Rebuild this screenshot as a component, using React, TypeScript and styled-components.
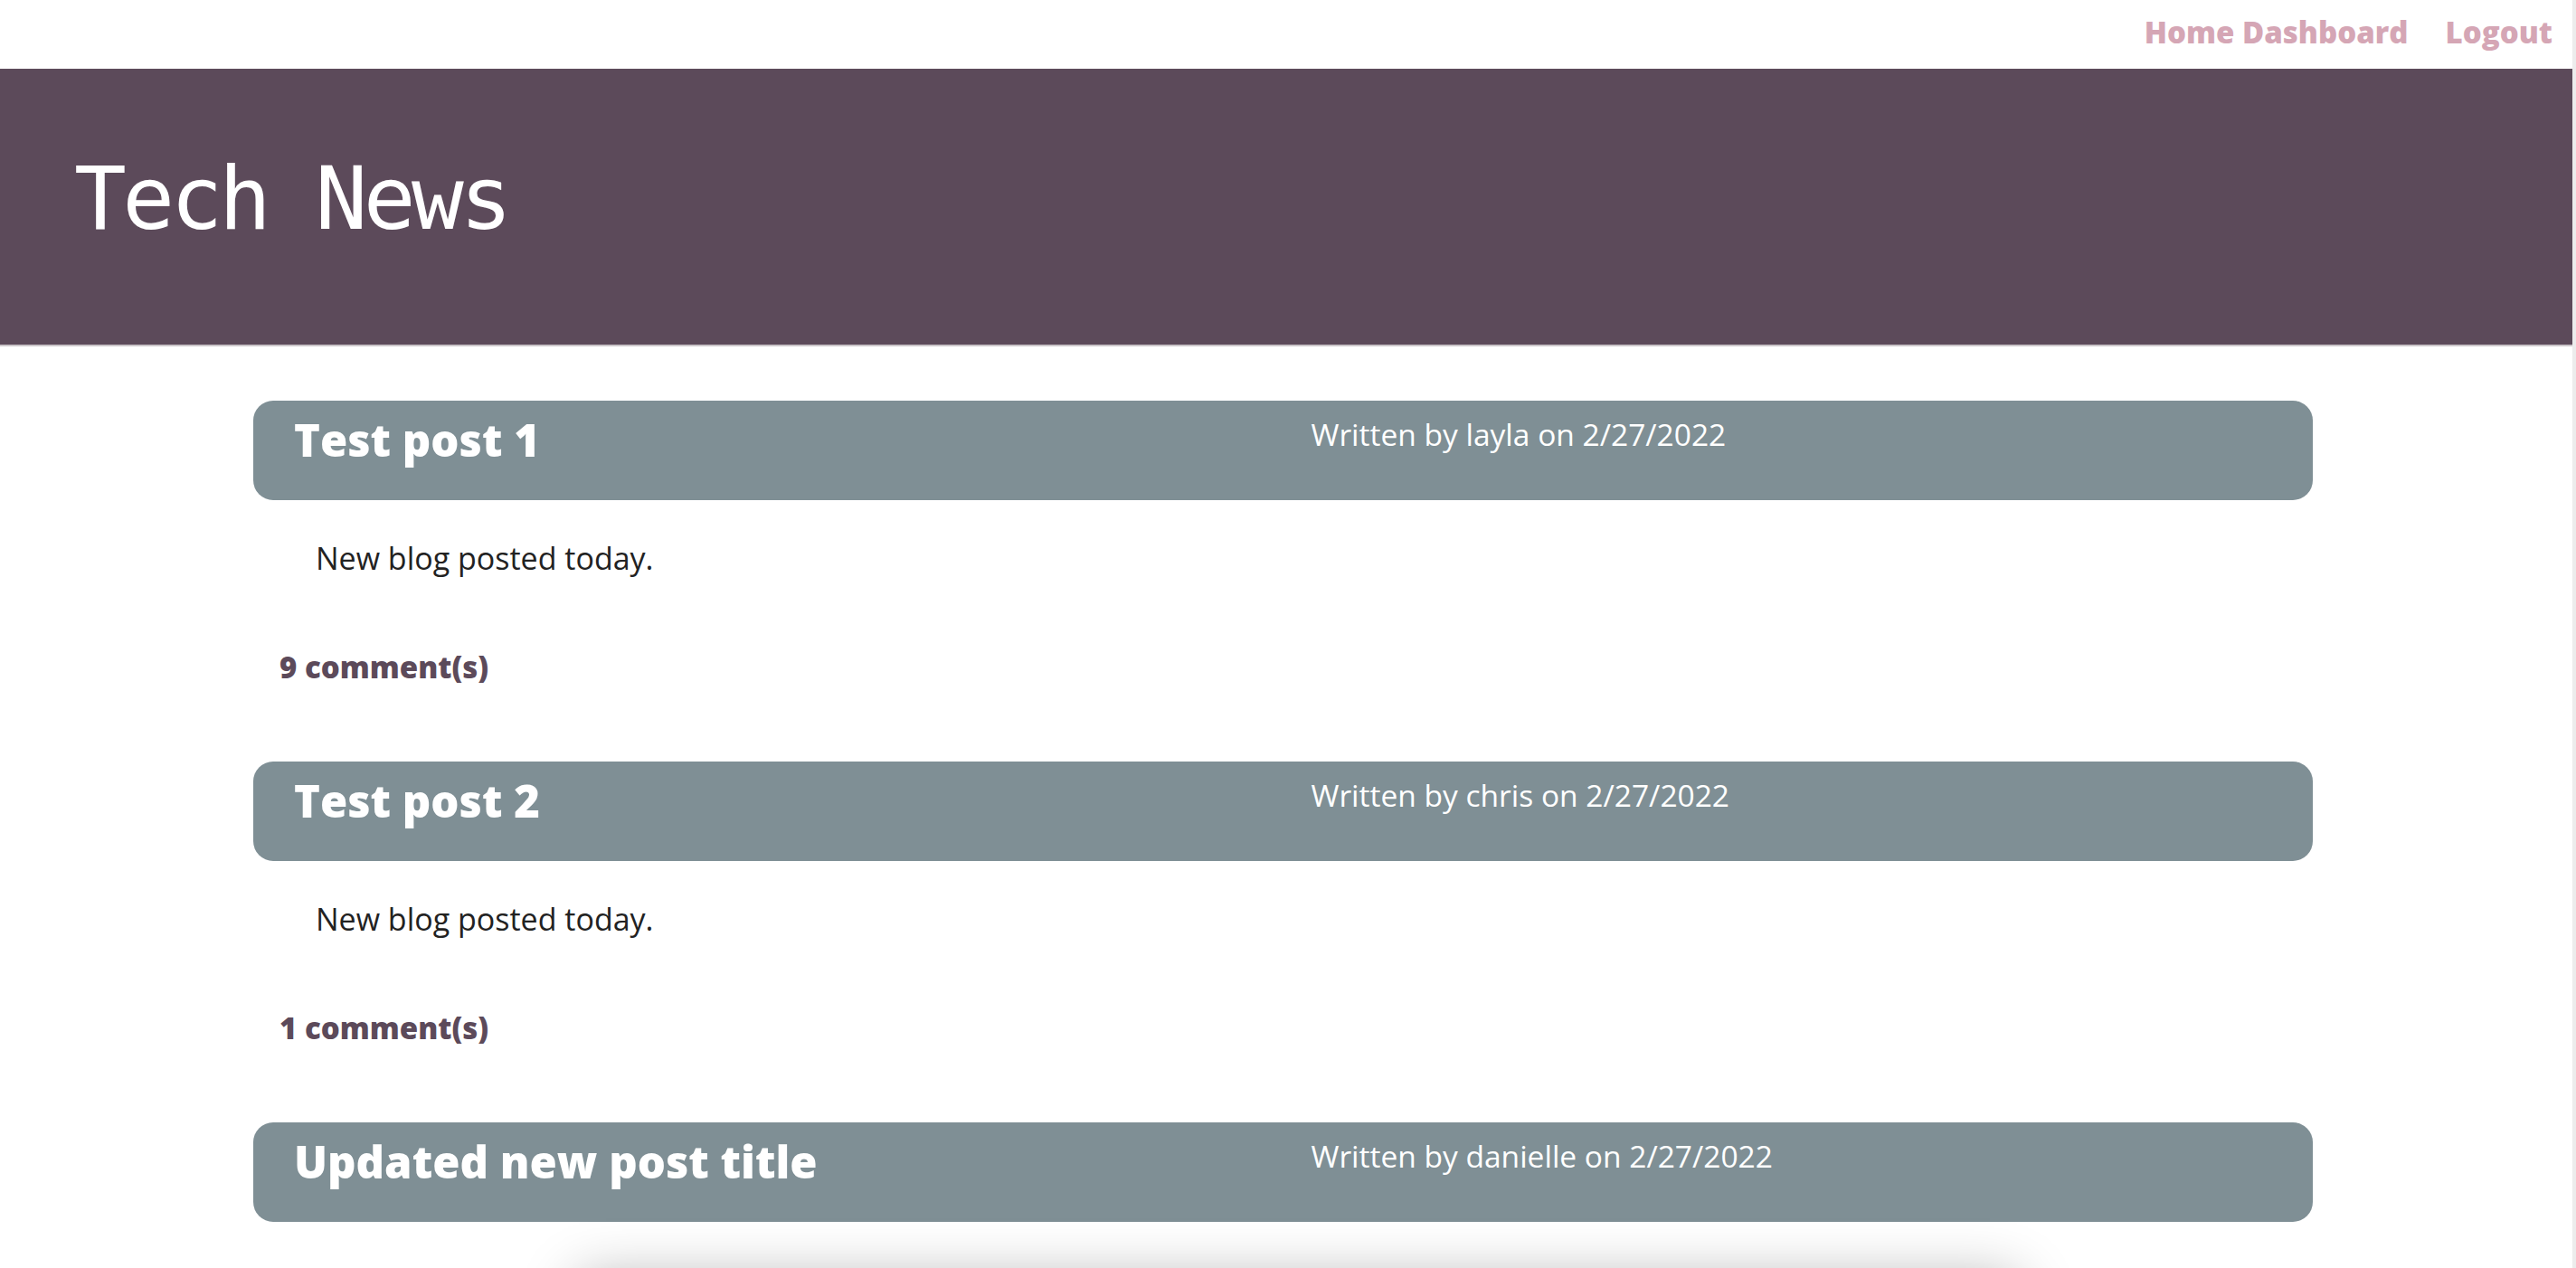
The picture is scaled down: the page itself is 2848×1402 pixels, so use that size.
import React from "react";
import styled, { createGlobalStyle } from "styled-components";

const GlobalStyle = createGlobalStyle`
  html, body {
    margin: 0;
    padding: 0;
    background: #ffffff;
    overflow: hidden;
  }
  body {
    font-family: "Open Sans", "Noto Sans", sans-serif;
  }
  * { box-sizing: border-box; }
`;

const Page = styled.div`
  display: flex;
  width: 2848px;
  height: 1402px;
  overflow: hidden;
`;

const Main = styled.div`
  flex: 1;
  min-width: 0;
  display: flex;
  flex-direction: column;
`;

const ScrollTrack = styled.div`
  width: 4px;
  flex: none;
  background: #ececec;
`;

const Nav = styled.nav`
  height: 76px;
  flex: none;
  display: flex;
  justify-content: flex-end;
  align-items: center;
  gap: 41px;
  padding: 0 22px 6px 0;
`;

const NavLink = styled.a`
  font-family: "Open Sans", sans-serif;
  font-weight: 800;
  font-size: 33px;
  color: #d5a6b5;
  text-decoration: none;
  line-height: 1;
`;

const Hero = styled.header`
  height: 307px;
  flex: none;
  background: #5c4a5a;
  border-bottom: 2px solid #cbc5c9;
  display: flex;
  align-items: center;
  padding: 0 0 18px 82px;
`;

const SiteTitle = styled.h1`
  margin: 0;
  font-family: "DejaVu Sans Mono", "Liberation Mono", monospace;
  font-weight: 400;
  font-size: 96px;
  letter-spacing: -4.5px;
  line-height: 1;
  color: #ffffff;
`;

const Feed = styled.main`
  width: 2277px;
  margin: 60px 0 0 280px;
  display: flex;
  flex-direction: column;
`;

const Post = styled.article`
  display: flex;
  flex-direction: column;
  height: 399px;
  flex: none;
`;

const PostHeader = styled.div`
  height: 110px;
  flex: none;
  background: #7f8f95;
  border-radius: 22px;
  display: grid;
  grid-template-columns: 1fr 1fr;
  align-items: start;
  padding: 14px 45px 0 45px;
  color: #ffffff;
`;

const PostTitle = styled.h2`
  margin: 0;
  font-family: "Open Sans", sans-serif;
  font-weight: 800;
  font-size: 49px;
  line-height: 1.2;
`;

const PostMeta = styled.p`
  margin: 2px 0 0 31px;
  font-family: "Open Sans", sans-serif;
  font-weight: 400;
  font-size: 33.5px;
  line-height: 1.3;
`;

const PostBody = styled.p`
  margin: 42px 0 0 69px;
  font-family: "Open Sans", sans-serif;
  font-size: 34px;
  line-height: 1.3;
  color: #222222;
`;

const CommentCount = styled.a`
  margin: 78px 0 0 29px;
  font-family: "Open Sans", sans-serif;
  font-weight: 800;
  font-size: 33px;
  line-height: 1.3;
  color: #5c4a5a;
  text-decoration: none;
`;

const ShadowPanel = styled.div`
  width: 1590px;
  height: 240px;
  margin: 64px 0 0 360px;
  background: #ffffff;
  box-shadow: 0 0 60px rgba(0, 0, 0, 0.32);
  flex: none;
`;

type PostData = { title: string; author: string; date: string; body: string; comments: number };

const posts: PostData[] = [
  { title: "Test post 1", author: "layla", date: "2/27/2022", body: "New blog posted today.", comments: 9 },
  { title: "Test post 2", author: "chris", date: "2/27/2022", body: "New blog posted today.", comments: 1 },
];

export default function App() {
  return (
    <>
      <GlobalStyle />
      <Page>
        <Main>
          <Nav>
            <NavLink href="#">Home Dashboard</NavLink>
            <NavLink href="#">Logout</NavLink>
          </Nav>
          <Hero>
            <SiteTitle>Tech News</SiteTitle>
          </Hero>
          <Feed>
            {posts.map((p) => (
              <Post key={p.title}>
                <PostHeader>
                  <PostTitle>{p.title}</PostTitle>
                  <PostMeta>
                    Written by {p.author} on {p.date}
                  </PostMeta>
                </PostHeader>
                <PostBody>{p.body}</PostBody>
                <CommentCount href="#">{p.comments} comment(s)</CommentCount>
              </Post>
            ))}
            <PostHeader>
              <PostTitle>Updated new post title</PostTitle>
              <PostMeta>Written by danielle on 2/27/2022</PostMeta>
            </PostHeader>
            <ShadowPanel />
          </Feed>
        </Main>
        <ScrollTrack />
      </Page>
    </>
  );
}
